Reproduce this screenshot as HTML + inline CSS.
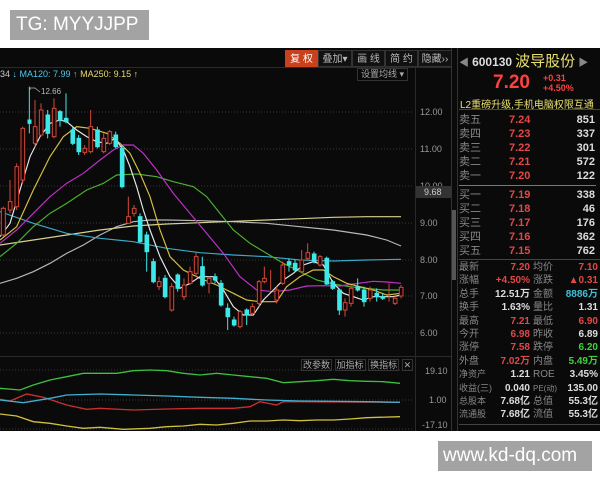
<!DOCTYPE html>
<html><head><meta charset="utf-8"><style>
*{margin:0;padding:0;box-sizing:border-box}
body{width:600px;height:480px;background:#fff;position:relative;overflow:hidden;font-family:"Liberation Sans","Noto Sans CJK SC",sans-serif}
.abs{position:absolute}
#tg{left:10px;top:10px;width:139px;height:30px;background:#a3a3a3;color:#fff;font-size:19px;line-height:30px;padding-left:6px}
#wm{left:438px;top:441px;width:154px;height:30px;background:#a3a3a3;color:#fff;font-size:19px;line-height:30px;padding-left:5px}
#blk{left:0;top:48px;width:600px;height:383px;background:#0a0a0a}
.btn{top:50px;height:17px;font-size:10px;line-height:17px;text-align:center;color:#bbb;border:1px solid #333;background:#111}
.ax{font-size:9px;color:#999;left:420px}
.rp{font-family:"Liberation Sans","Noto Sans CJK SC",sans-serif;font-size:11px}
.row{position:absolute;left:459px;width:140px;height:14px;line-height:14px}
.row span{position:absolute}
.l{left:0;color:#888}
.p{left:50px;color:#e04848;font-weight:bold}
.v{right:4px;color:#ddd;font-weight:bold}
.g{display:flex;white-space:nowrap;height:13.4px}
.g b{font-weight:bold;text-align:right}
.a{width:31px;color:#888;overflow:visible}
.b{width:40px}
.c{width:31px;color:#888;padding-left:3px}
.d{width:37px}
</style></head><body>
<div id="tg" class="abs">TG: MYYJJPP</div>
<div id="blk" class="abs"></div>
<div class="abs btn" style="left:285px;width:33px;background:#c8401c;color:#fff;border-color:#c8401c">复 权</div>
<div class="abs btn" style="left:318px;width:34px">叠加▾</div>
<div class="abs btn" style="left:352px;width:33px">画 线</div>
<div class="abs btn" style="left:385px;width:33px">简 约</div>
<div class="abs btn" style="left:418px;width:34px">隐藏››</div>
<div class="abs" style="left:0;top:67px;width:452px;height:1px;background:#2a2a2a"></div>
<div class="abs" style="left:0;top:69px;font-size:9px;color:#ccc;white-space:nowrap">34 <span style="color:#4fc7e8">↓ MA120: 7.99 ↑</span> <span style="color:#e8d870">MA250: 9.15 ↑</span></div>
<div class="abs" style="left:357px;top:68px;width:51px;height:13px;border:1px solid #333;color:#aaa;font-size:9px;line-height:11px;text-align:center">设置均线 ▾</div>
<div class="abs" style="left:415px;top:68px;width:1px;height:363px;background:#2a2a2a"></div>
<div class="abs" style="left:451px;top:48px;width:1px;height:383px;background:#333"></div>
<div class="abs" style="left:452px;top:210px;width:4px;height:70px;background:#555"></div>
<div class="abs" style="left:457px;top:48px;width:1px;height:383px;background:#333"></div>
<div class="abs ax" style="top:107px">12.00</div>
<div class="abs ax" style="top:144px">11.00</div>
<div class="abs ax" style="top:181px">10.00</div>
<div class="abs" style="left:416px;top:186px;width:36px;height:12px;background:#333;color:#ccc;font-size:9px;line-height:12px;padding-left:8px">9.68</div>
<div class="abs ax" style="top:218px">9.00</div>
<div class="abs ax" style="top:255px">8.00</div>
<div class="abs ax" style="top:291px">7.00</div>
<div class="abs ax" style="top:328px">6.00</div>
<div class="abs" style="left:0;top:356px;width:451px;height:1px;background:#2a2a2a"></div>
<div class="abs ax" style="top:366px;left:425px">19.10</div>
<div class="abs ax" style="top:395px;left:429px">1.00</div>
<div class="abs ax" style="top:420px;left:422px">-17.10</div>
<div class="abs" style="left:301px;top:358px;font-size:9px;color:#aaa;white-space:nowrap"><span style="border:1px solid #333;padding:0 1px">改参数</span> <span style="border:1px solid #333;padding:0 1px">加指标</span> <span style="border:1px solid #333;padding:0 1px">换指标</span> <span style="border:1px solid #333;padding:0 1px">✕</span></div>
<svg class="abs" style="left:0;top:0" width="451" height="431">
<g stroke="#444" stroke-dasharray="1,2" stroke-width="0.7">
<line x1="0" y1="112" x2="414" y2="112"/><line x1="0" y1="149" x2="414" y2="149"/><line x1="0" y1="186" x2="414" y2="186"/><line x1="0" y1="223" x2="414" y2="223"/><line x1="0" y1="260" x2="414" y2="260"/><line x1="0" y1="296" x2="414" y2="296"/><line x1="0" y1="333" x2="414" y2="333"/>
<line x1="0" y1="370" x2="414" y2="370"/><line x1="0" y1="400" x2="414" y2="400"/><line x1="0" y1="429" x2="414" y2="429"/>
</g>
<text x="41" y="94" fill="#bbb" font-size="8" font-family="Liberation Sans">12.66</text>
<path d="M30 90 L30 88 L35 88 L40 92" stroke="#bbb" fill="none" stroke-width="0.7"/>
<g transform="translate(0,80) scale(0.33333)" fill="none" stroke-width="3.5">
<polyline stroke="#b8b8b8" points="0,610 50,595 100,575 150,550 200,520 250,495 300,465 350,440 400,425 450,420 500,420 600,422 700,425 800,430 900,440 1000,450 1100,465 1160,480 1203,498"/>
<polyline stroke="#d8d090" points="0,495 100,480 200,465 300,450 400,438 500,432 600,428 700,424 800,420 900,416 1000,412 1100,410 1203,410"/>
<polyline stroke="#3aa8c8" points="0,395 100,430 200,460 300,475 400,485 500,505 600,518 700,525 800,530 900,540 1000,543 1100,540 1203,538"/>
<polyline stroke="#4cb030" points="0,530 50,490 100,440 150,400 200,370 260,330 310,310 350,285 410,282 470,290 520,305 580,320 620,350 660,400 700,450 750,490 800,520 850,550 900,575 950,600 1000,612 1050,620 1100,625 1150,630 1203,630"/>
<polyline stroke="#c030c8" points="0,490 50,450 100,400 150,350 200,310 250,280 300,240 340,210 370,195 400,195 430,220 470,270 520,340 570,400 620,460 670,520 720,590 770,630 820,635 870,630 920,618 970,617 1020,618 1060,612 1120,604 1160,606 1203,610"/>
<polyline stroke="#d8c040" points="0,480 50,440 100,330 150,230 190,170 230,140 270,145 320,160 360,190 390,220 420,280 450,350 480,450 510,530 550,570 600,595 650,615 700,640 740,660 780,665 830,665 860,620 900,590 940,570 970,570 1000,590 1040,610 1080,620 1120,630 1160,645 1203,640"/>
<polyline stroke="#e8e8e8" points="0,470 30,430 60,330 90,230 120,170 150,130 180,120 200,125 230,150 260,170 290,185 320,190 345,175 370,210 390,260 410,320 430,390 450,450 480,530 510,590 540,625 570,610 600,590 640,590 670,630 700,680 730,705 760,705 790,660 820,630 850,600 880,580 910,555 940,545 970,555 1000,610 1030,640 1060,650 1090,660 1120,650 1150,650 1180,650 1203,645"/>
<g stroke="#d04a3a" stroke-width="3">
<path d="M10 380V470M30 300V400M50 250V390M68 140V310M105 60V200M123 70V170M162 55V175M254 195V225M272 90V220M311 160V220M329 150V195M385 350V430M402 375V410M477 590V630M515 610V695M552 595V660M570 560V615M588 515V590M627 590V640M720 690V745M757 670V705M777 600V680M793 560V610M812 570V630M830 620V670M848 545V615M905 510V580M923 490V540M960 525V560M1035 655V710M1053 615V680M1110 620V665M1167 610V665M1185 645V675M1203 615V655"/>
<g fill="#1a0000">
<rect x="4" y="385" width="12" height="80"/><rect x="25" y="365" width="11" height="25"/><rect x="45" y="260" width="11" height="120"/><rect x="63" y="145" width="11" height="155"/><rect x="100" y="140" width="11" height="50"/><rect x="118" y="90" width="11" height="75"/><rect x="157" y="85" width="11" height="85"/><rect x="249" y="205" width="11" height="12"/><rect x="267" y="140" width="11" height="75"/><rect x="306" y="175" width="11" height="40"/><rect x="324" y="155" width="11" height="35"/><rect x="380" y="410" width="11" height="20"/><rect x="397" y="385" width="11" height="15"/><rect x="472" y="605" width="11" height="15"/><rect x="510" y="620" width="11" height="70"/><rect x="547" y="615" width="11" height="35"/><rect x="565" y="575" width="11" height="35"/><rect x="583" y="530" width="11" height="50"/><rect x="622" y="595" width="11" height="15"/><rect x="715" y="695" width="11" height="45"/><rect x="752" y="680" width="11" height="20"/><rect x="772" y="605" width="11" height="65"/><rect x="788" y="595" width="11" height="10"/><rect x="825" y="630" width="11" height="30"/><rect x="843" y="555" width="11" height="55"/><rect x="900" y="540" width="11" height="35"/><rect x="918" y="518" width="11" height="17"/><rect x="955" y="530" width="11" height="25"/><rect x="1030" y="668" width="11" height="22"/><rect x="1048" y="625" width="11" height="45"/><rect x="1105" y="630" width="11" height="25"/><rect x="1180" y="655" width="11" height="15"/><rect x="1198" y="622" width="11" height="26"/>
</g></g>
<g stroke="#3ee8e8" fill="#3ee8e8" stroke-width="3">
<path d="M88 20V160M143 90V175M180 90V140M198 40V130M218 140V195M236 165V225M292 140V205M347 155V205M366 195V325M420 400V490M440 455V575M460 535V610M495 585V655M533 580V635M607 530V620M645 580V610M663 600V680M683 670V750M702 710V740M740 685V735M867 535V575M885 540V575M942 515V550M980 530V615M998 600V630M1018 625V705M1073 595V635M1092 620V680M1130 625V665M1148 640V660"/>
<rect x="84" y="120" width="9" height="10"/><rect x="138" y="105" width="11" height="55"/><rect x="175" y="95" width="11" height="25"/><rect x="193" y="115" width="11" height="10"/><rect x="213" y="150" width="11" height="40"/><rect x="231" y="175" width="11" height="40"/><rect x="287" y="150" width="11" height="50"/><rect x="342" y="165" width="11" height="35"/><rect x="361" y="205" width="11" height="115"/><rect x="415" y="410" width="11" height="75"/><rect x="435" y="465" width="11" height="50"/><rect x="455" y="545" width="11" height="60"/><rect x="490" y="595" width="11" height="55"/><rect x="528" y="585" width="11" height="40"/><rect x="602" y="560" width="11" height="55"/><rect x="640" y="590" width="11" height="10"/><rect x="658" y="610" width="11" height="65"/><rect x="678" y="685" width="11" height="25"/><rect x="697" y="720" width="11" height="15"/><rect x="735" y="690" width="11" height="15"/><rect x="862" y="545" width="11" height="10"/><rect x="880" y="550" width="11" height="20"/><rect x="937" y="522" width="11" height="23"/><rect x="975" y="535" width="11" height="77"/><rect x="993" y="605" width="11" height="20"/><rect x="1013" y="630" width="11" height="60"/><rect x="1068" y="620" width="11" height="10"/><rect x="1087" y="630" width="11" height="35"/><rect x="1125" y="640" width="11" height="10"/><rect x="1143" y="650" width="11" height="5"/>
</g>
</g>
<g transform="translate(0,340) scale(0.33333)" fill="none" stroke-width="4">
<polyline stroke="#3cc040" points="0,145 60,150 100,135 150,120 200,110 250,100 300,100 350,100 400,92 450,90 500,92 550,100 600,105 650,100 700,105 750,110 800,115 850,128 900,125 950,122 1000,118 1050,122 1100,124 1150,125 1200,130"/>
<polyline stroke="#c83030" points="0,178 30,183 80,162 130,172 200,195 260,208 300,205 400,210 500,207 600,205 700,205 750,200 780,185 830,195 850,185 900,185 1200,187"/>
<polyline stroke="#40b0d0" points="0,180 70,188 150,175 200,165 300,162 400,165 500,168 600,172 700,175 800,180 900,183 1000,184 1100,185 1200,187"/>
<polyline stroke="#d0c040" points="0,222 50,228 100,245 150,250 200,258 250,265 300,262 370,268 450,265 500,260 550,258 600,253 650,255 700,250 750,243 800,243 850,240 900,242 950,240 1000,240 1050,237 1100,233 1200,230"/>
</g>
</svg>
<div class="abs rp" style="left:459px;top:50px;width:141px;white-space:nowrap">
<span style="color:#888;font-size:10px">◀</span> <span style="color:#ddd;font-size:12px;font-weight:bold">600130</span> <span style="color:#e8e070;font-size:15px">波导股份</span> <span style="color:#888;font-size:10px">▶</span>
</div>
<div class="abs" style="left:493px;top:72px;color:#ff4040;font-size:19px;font-weight:bold">7.20</div>
<div class="abs" style="left:543px;top:73px;color:#ff4040;font-size:9px;font-weight:bold;line-height:10px">+0.31<br>+4.50%</div>
<div class="abs" style="left:460px;top:96px;color:#e8e070;font-size:10px;text-decoration:underline;white-space:nowrap">L2重磅升级,手机电脑权限互通</div>
<div class="abs" style="left:459px;top:109px;width:141px;height:1px;background:#444"></div>
<div class="abs" style="left:459px;top:185px;width:137px;height:1px;background:#777"></div>
<div class="rp">
<div class="row" style="top:113px"><span class="l">卖五</span><span class="p">7.24</span><span class="v">851</span></div>
<div class="row" style="top:127px"><span class="l">卖四</span><span class="p">7.23</span><span class="v">337</span></div>
<div class="row" style="top:141px"><span class="l">卖三</span><span class="p">7.22</span><span class="v">301</span></div>
<div class="row" style="top:155px"><span class="l">卖二</span><span class="p">7.21</span><span class="v">572</span></div>
<div class="row" style="top:169px"><span class="l">卖一</span><span class="p">7.20</span><span class="v">122</span></div>
<div class="row" style="top:188px"><span class="l">买一</span><span class="p">7.19</span><span class="v">338</span></div>
<div class="row" style="top:202px"><span class="l">买二</span><span class="p">7.18</span><span class="v">46</span></div>
<div class="row" style="top:216px"><span class="l">买三</span><span class="p">7.17</span><span class="v">176</span></div>
<div class="row" style="top:230px"><span class="l">买四</span><span class="p">7.16</span><span class="v">362</span></div>
<div class="row" style="top:244px"><span class="l">买五</span><span class="p">7.15</span><span class="v">762</span></div>
</div>
<div class="abs" style="left:459px;top:259px;width:141px;height:1px;background:#444"></div>
<div class="abs rp" style="left:459px;top:261px;width:139px;font-size:10px;line-height:13.4px">
<div class="g"><span class="a">最新</span><b class="b" style="color:#e04848">7.20</b><span class="c">均价</span><b class="d" style="color:#e04848">7.10</b></div>
<div class="g"><span class="a">涨幅</span><b class="b" style="color:#e04848">+4.50%</b><span class="c">涨跌</span><b class="d" style="color:#e04848">▲0.31</b></div>
<div class="g"><span class="a">总手</span><b class="b" style="color:#ddd">12.51万</b><span class="c">金额</span><b class="d" style="color:#40c0d8">8886万</b></div>
<div class="g"><span class="a">换手</span><b class="b" style="color:#ddd">1.63%</b><span class="c">量比</span><b class="d" style="color:#ddd">1.31</b></div>
<div class="g"><span class="a">最高</span><b class="b" style="color:#e04848">7.21</b><span class="c">最低</span><b class="d" style="color:#e04848">6.90</b></div>
<div class="g"><span class="a">今开</span><b class="b" style="color:#e04848">6.98</b><span class="c">昨收</span><b class="d" style="color:#ddd">6.89</b></div>
<div class="g"><span class="a">涨停</span><b class="b" style="color:#e04848">7.58</b><span class="c">跌停</span><b class="d" style="color:#40d040">6.20</b></div>
<div class="g"><span class="a">外盘</span><b class="b" style="color:#e04848">7.02万</b><span class="c">内盘</span><b class="d" style="color:#40d040">5.49万</b></div>
<div class="g"><span class="a" style="font-size:9px">净资产</span><b class="b" style="color:#ddd">1.21</b><span class="c">ROE</span><b class="d" style="color:#ddd">3.45%</b></div>
<div class="g"><span class="a" style="font-size:9px">收益(三)</span><b class="b" style="color:#ddd">0.040</b><span class="c" style="font-size:8px">PE(动)</span><b class="d" style="color:#ddd">135.00</b></div>
<div class="g"><span class="a" style="font-size:9px">总股本</span><b class="b" style="color:#ddd">7.68亿</b><span class="c">总值</span><b class="d" style="color:#ddd">55.3亿</b></div>
<div class="g"><span class="a" style="font-size:9px">流通股</span><b class="b" style="color:#ddd">7.68亿</b><span class="c">流值</span><b class="d" style="color:#ddd">55.3亿</b></div>
</div>
<div class="abs" style="left:459px;top:424px;width:141px;height:1px;background:#444"></div>
<div class="abs" style="left:0;top:431px;width:600px;height:49px;background:#fff"></div>
<div id="wm" class="abs">www.kd-dq.com</div>
</body></html>
